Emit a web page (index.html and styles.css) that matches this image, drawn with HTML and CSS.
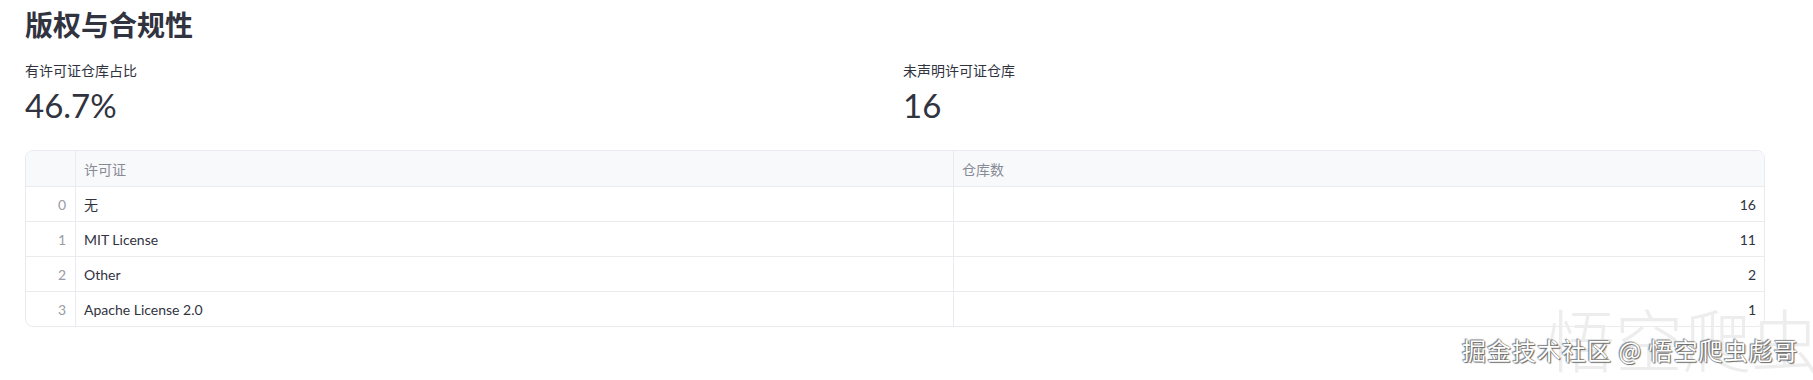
FILE: index.html
```html
<!DOCTYPE html>
<html lang="zh">
<head>
<meta charset="utf-8">
<link rel="stylesheet" href="styles.css">
</head>
<body>
<div class="page">
  <h2 class="title">版权与合规性</h2>
  <div class="metrics">
    <div class="metric">
      <div class="metric-label">有许可证仓库占比</div>
      <div class="metric-value">46.7%</div>
    </div>
    <div class="metric">
      <div class="metric-label">未声明许可证仓库</div>
      <div class="metric-value">16</div>
    </div>
  </div>
  <div class="table">
    <div class="row head">
      <div class="cell idx"></div>
      <div class="cell">许可证</div>
      <div class="cell">仓库数</div>
    </div>
    <div class="row">
      <div class="cell idx">0</div>
      <div class="cell">无</div>
      <div class="cell num">16</div>
    </div>
    <div class="row">
      <div class="cell idx">1</div>
      <div class="cell">MIT License</div>
      <div class="cell num">11</div>
    </div>
    <div class="row">
      <div class="cell idx">2</div>
      <div class="cell">Other</div>
      <div class="cell num">2</div>
    </div>
    <div class="row last">
      <div class="cell idx">3</div>
      <div class="cell">Apache License 2.0</div>
      <div class="cell num">1</div>
    </div>
  </div>
</div>
<div class="wm-big">悟空爬虫</div>
<div class="wm-small">掘金技术社区 @ 悟空爬虫彪哥</div>
</body>
</html>
```

FILE: styles.css
```css
html, body {
  margin: 0;
  padding: 0;
  background: #ffffff;
  overflow: hidden;
}
body {
  font-family: Lato, "Noto Sans CJK SC", sans-serif;
  color: #31333f;
  width: 1813px;
  height: 380px;
  position: relative;
}
.page {
  padding: 6px 0 0 25px;
  width: 1740px;
}
.title {
  margin: 0;
  font-family: "Noto Sans CJK SC", sans-serif;
  font-size: 28px;
  line-height: 36px;
  font-weight: 700;
  color: #31333f;
}
.metrics {
  display: grid;
  grid-template-columns: 1fr 1fr;
  column-gap: 16px;
  margin-top: 18px;
}
.metric-label {
  font-family: "Noto Sans CJK SC", sans-serif;
  font-size: 14px;
  line-height: 20px;
  color: #31333f;
}
.metric-value {
  font-size: 33px;
  line-height: 43px;
  font-weight: 400;
  color: #31333f;
  margin-top: 4px;
}
.table {
  margin-top: 23px;
  border: 1px solid #e9ebef;
  border-radius: 8px;
  overflow: hidden;
  font-size: 14px;
}
.row {
  display: grid;
  grid-template-columns: 50px 878px 1fr;
  height: 35px;
  border-bottom: 1px solid #e9ebef;
  box-sizing: border-box;
}
.row.head {
  height: 36px;
  background: #f8f9fb;
  color: #888b96;
}
.row.last {
  border-bottom: none;
  height: 34px;
}
.cell {
  display: flex;
  align-items: center;
  padding: 0 8px;
  border-right: 1px solid #e9ebef;
  white-space: nowrap;
}
.cell:last-child {
  border-right: none;
}
.cell.idx {
  justify-content: flex-end;
  color: #9a9ca5;
  padding-right: 9px;
}
.cell.num {
  justify-content: flex-end;
}
.wm-big {
  position: absolute;
  left: 1547px;
  top: 298px;
  font-family: "Noto Sans CJK SC", sans-serif;
  font-size: 68px;
  line-height: 80px;
  font-weight: 300;
  color: #ededed;
  white-space: nowrap;
  pointer-events: none;
}
.wm-small {
  position: absolute;
  left: 1462px;
  top: 334px;
  font-family: "Noto Sans CJK SC", sans-serif;
  font-size: 24px;
  line-height: 32px;
  letter-spacing: 1px;
  color: #ffffff;
  white-space: nowrap;
  text-shadow: 0 0 1px #555, 1px 1px 1px #666, -1px -1px 1px #888;
  pointer-events: none;
}
```
